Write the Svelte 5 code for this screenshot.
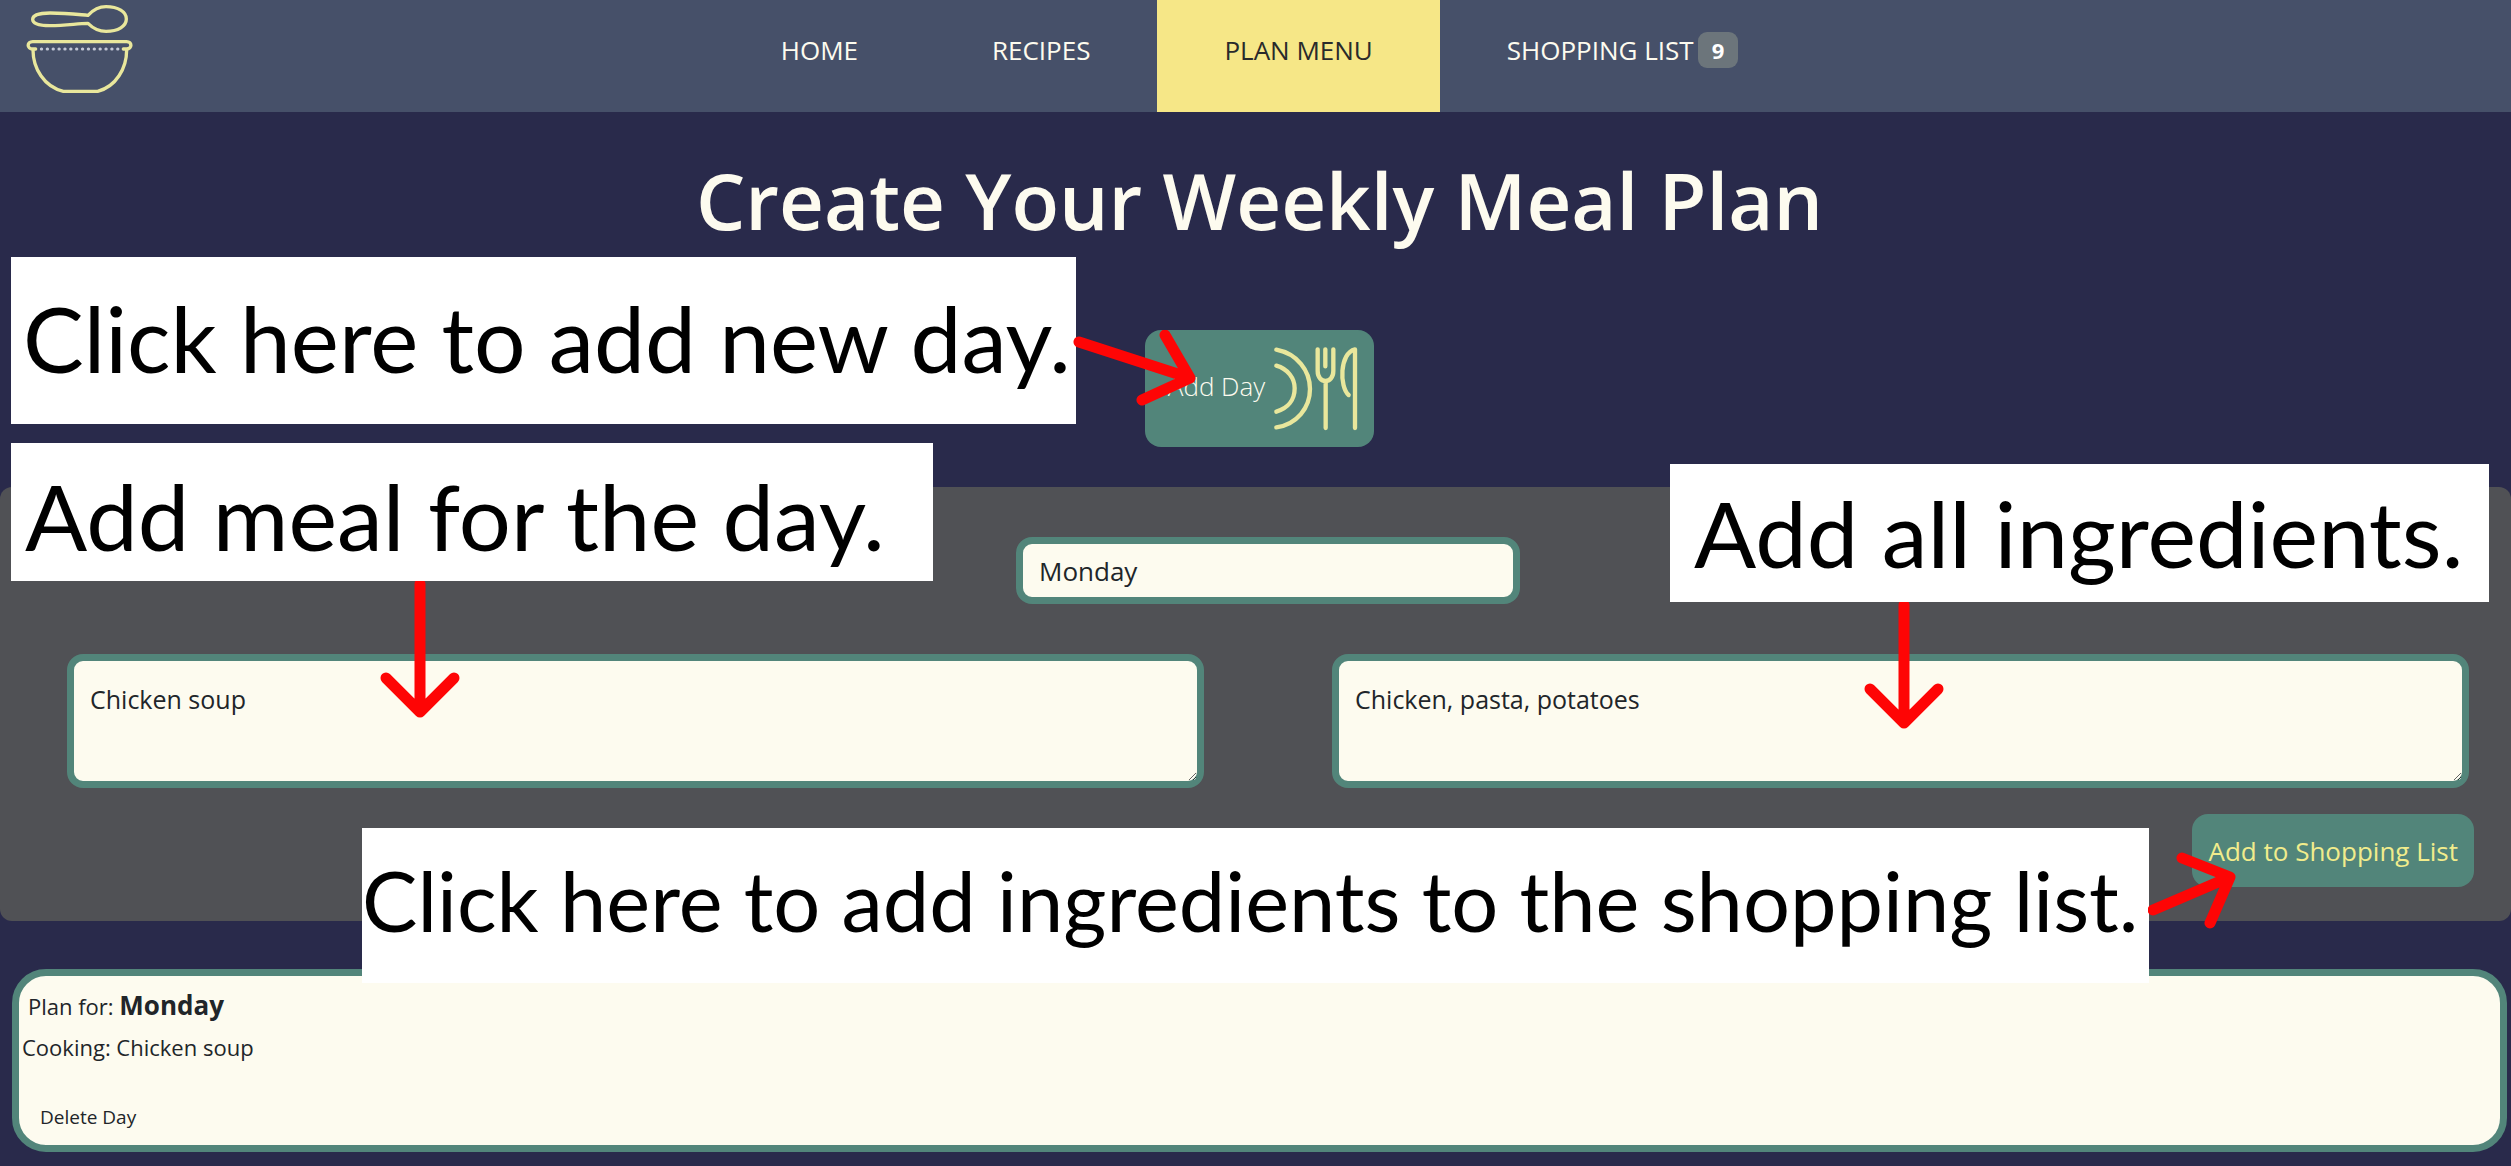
<script>
  const links = [
    { label: 'HOME', href: '#home' },
    { label: 'RECIPES', href: '#recipes' },
    { label: 'PLAN MENU', href: '#plan', active: true },
    { label: 'SHOPPING LIST', href: '#shopping', count: 9 }
  ];
  let day = $state('Monday');
  let meal = $state('Chicken soup');
  let ingredients = $state('Chicken, pasta, potatoes');
</script>

<div class="page">
  <header class="nav">
    <a class="logo" href="#home" aria-label="Home">
      <svg viewBox="0 0 480 333" fill="none" stroke="#e9e79c" stroke-width="10" stroke-linecap="round" stroke-linejoin="round">
        <path d="M264 46C230 43 200 39 150 39C115 39 98 47 98 58C98 70 115 77 150 77C200 76 230 71 264 70C280 86 295 94 318 94C355 94 379 78 379 57C379 36 355 20 318 20C295 20 280 29 264 46Z" />
        <path d="M107 147H98C80 147 80 125 98 125H380C397 125 397 147 380 147H370" />
        <path d="M99 149C99 205 132 260 190 274H293C348 260 380 205 380 149" />
        <path d="M124 147H360" stroke="#c3c8d6" stroke-width="9" stroke-dasharray="1 16.6" />
      </svg>
    </a>
    <nav class="links">
      {#each links as link}
        <a class="link" class:active={link.active} href={link.href}>
          {link.label}
          {#if link.count}<span class="badge">{link.count}</span>{/if}
        </a>
      {/each}
    </nav>
  </header>

  <main>
    <section class="intro">
      <h1>Create Your Weekly Meal Plan</h1>
      <button class="add-day" type="button">
        <span>Add Day</span>
        <svg viewBox="0 0 264 252" fill="none" stroke="#e9e79c" stroke-width="13" stroke-linecap="round" stroke-linejoin="round">
          <path d="M13 8C75 20 114 70 114 126C114 182 75 232 13 241" />
          <path d="M13 56C48 66 68 94 68 124C68 158 48 184 13 194" />
          <path d="M137 7V72C137 112 184 112 184 72V7M160 7V58M161 103V243" />
          <path d="M249 243V7C202 18 202 120 230 144" />
        </svg>
      </button>
    </section>

    <form class="planner">
      <input class="field day" type="text" aria-label="Day" bind:value={day} />
      <div class="areas">
        <textarea class="field" aria-label="Meal" bind:value={meal}></textarea>
        <textarea class="field" aria-label="Ingredients" bind:value={ingredients}></textarea>
      </div>
      <button class="add-list" type="button">Add to Shopping List</button>
    </form>

    <article class="card">
      <p class="plan">Plan for: <strong>{day}</strong></p>
      <p class="cooking">Cooking: {meal}</p>
      <button class="delete" type="button">Delete Day</button>
    </article>
  </main>

  <aside class="callout new-day">
    Click here to add new day.
    <svg class="arrow" viewBox="0 0 130 80"><path d="M6 12L117 48M92 5L117 48L69 70" /></svg>
  </aside>
  <aside class="callout meal">
    Add meal for the day.
    <svg class="arrow" viewBox="0 0 80 140"><path d="M40 3V131M6 97L40 131L74 97" /></svg>
  </aside>
  <aside class="callout ingredients">
    Add all ingredients.
    <svg class="arrow" viewBox="0 0 80 140"><path d="M40 3V120M6 87L40 121L74 87" /></svg>
  </aside>
  <aside class="callout shopping">
    Click here to add ingredients to the shopping list.
    <svg class="arrow" viewBox="0 0 100 80"><path d="M5 59L82 26M34 7L82 26L62 72" /></svg>
  </aside>
</div>

<style>
  :global(body) {
    margin: 0;
    background: #292a4b;
  }
  .page {
    position: relative;
    min-height: 100vh;
    background: #292a4b;
    color: #212529;
    font-family: 'Open Sans', 'Noto Sans', sans-serif;
    font-size: 26px;
    line-height: 38px;
    overflow: hidden;
  }
  .page * {
    box-sizing: border-box;
  }
  button,
  input,
  textarea {
    font: inherit;
  }
  .nav {
    display: grid;
    grid-template-columns: 1fr auto 1fr;
    height: 112px;
    padding-left: 8px;
    background: #465069;
  }
  .logo {
    display: block;
    height: 111px;
    margin-left: -8px;
  }
  .logo svg {
    display: block;
    width: 160px;
    height: 111px;
  }
  .links {
    display: flex;
  }
  .link {
    display: flex;
    align-items: center;
    gap: 4px;
    padding: 0 67px 12px;
    color: #fdfbef;
    text-decoration: none;
  }
  .active {
    background: #f6e787;
    color: #292a2b;
  }
  .badge {
    padding: 0 14px;
    border-radius: 9px;
    background: #6c757b;
    color: #fff;
    font-size: 22px;
    font-weight: 700;
    line-height: 36px;
  }
  .intro {
    display: flex;
    flex-direction: column;
    align-items: center;
    gap: 82px;
    padding: 40px 0 40px 8px;
  }
  h1 {
    margin: 0;
    color: #fdfbef;
    font-size: 78px;
    font-weight: 600;
    line-height: 96px;
  }
  .add-day {
    display: flex;
    align-items: center;
    gap: 7px;
    height: 117px;
    padding: 0 14px 0 23px;
    border: 0;
    border-radius: 16px;
    background: #52857a;
    color: #fdfbef;
    font-size: 26px;
    font-weight: 300;
  }
  .add-day span {
    padding-bottom: 6px;
  }
  .add-day svg {
    width: 88px;
    height: 84px;
  }
  .planner {
    display: flex;
    flex-direction: column;
    padding: 50px 42px 34px 67px;
    border-radius: 12px;
    background: #505155;
  }
  .field {
    display: block;
    border: 7px solid #52857a;
    border-radius: 16px;
    background: #fdfbef;
    color: #212529;
    outline: 0;
  }
  .day {
    align-self: center;
    width: 504px;
    height: 67px;
    padding: 0 16px;
  }
  .areas {
    display: grid;
    grid-template-columns: 1fr 1fr;
    gap: 128px;
    margin: 50px 0 26px;
  }
  textarea {
    height: 134px;
    padding: 19px 16px;
    font-size: 25px;
    resize: both;
  }
  .add-list {
    align-self: flex-end;
    height: 73px;
    margin-right: -5px;
    padding: 0 16px;
    border: 0;
    border-radius: 16px;
    background: #52857a;
    color: #f1ec8c;
  }
  .card {
    margin: 48px 4px 14px 12px;
    min-height: 183px;
    padding: 9px 3px;
    border: 7px solid #52857a;
    border-radius: 34px;
    background: #fdfbef;
    font-size: 22px;
  }
  p {
    margin: 0;
    line-height: 41px;
  }
  .plan {
    padding-left: 6px;
  }
  strong {
    font-size: 26px;
  }
  .delete {
    display: block;
    margin: 30px 0 0 18px;
    padding: 0;
    border: 0;
    background: none;
    color: #212529;
    font-size: 19px;
  }
  .callout {
    position: absolute;
    background: #fff;
    color: #000;
    font-family: Lato, sans-serif;
    font-size: 92px;
    white-space: nowrap;
  }
  .new-day {
    top: 257px;
    left: 11px;
    width: 1065px;
    padding: 0 0 6px 12px;
    font-size: 91px;
    line-height: 161px;
  }
  .meal {
    top: 443px;
    left: 11px;
    width: 922px;
    padding: 8px 0 0 14px;
    line-height: 130px;
  }
  .ingredients {
    top: 464px;
    right: 22px;
    width: 819px;
    padding-left: 24px;
    line-height: 138px;
  }
  .shopping {
    top: 828px;
    right: 362px;
    width: 1787px;
    padding-bottom: 10px;
    font-size: 83px;
    line-height: 145px;
  }
  .arrow {
    position: absolute;
    fill: none;
    stroke: #fe0505;
    stroke-width: 11px;
    stroke-linecap: round;
    stroke-linejoin: round;
  }
  .new-day .arrow {
    top: 73px;
    left: 1062px;
    width: 130px;
  }
  .meal .arrow {
    top: 138px;
    left: 369px;
    width: 80px;
  }
  .ingredients .arrow {
    top: 138px;
    left: 194px;
    width: 80px;
  }
  .shopping .arrow {
    top: 23px;
    left: 1786px;
    width: 100px;
  }
</style>
